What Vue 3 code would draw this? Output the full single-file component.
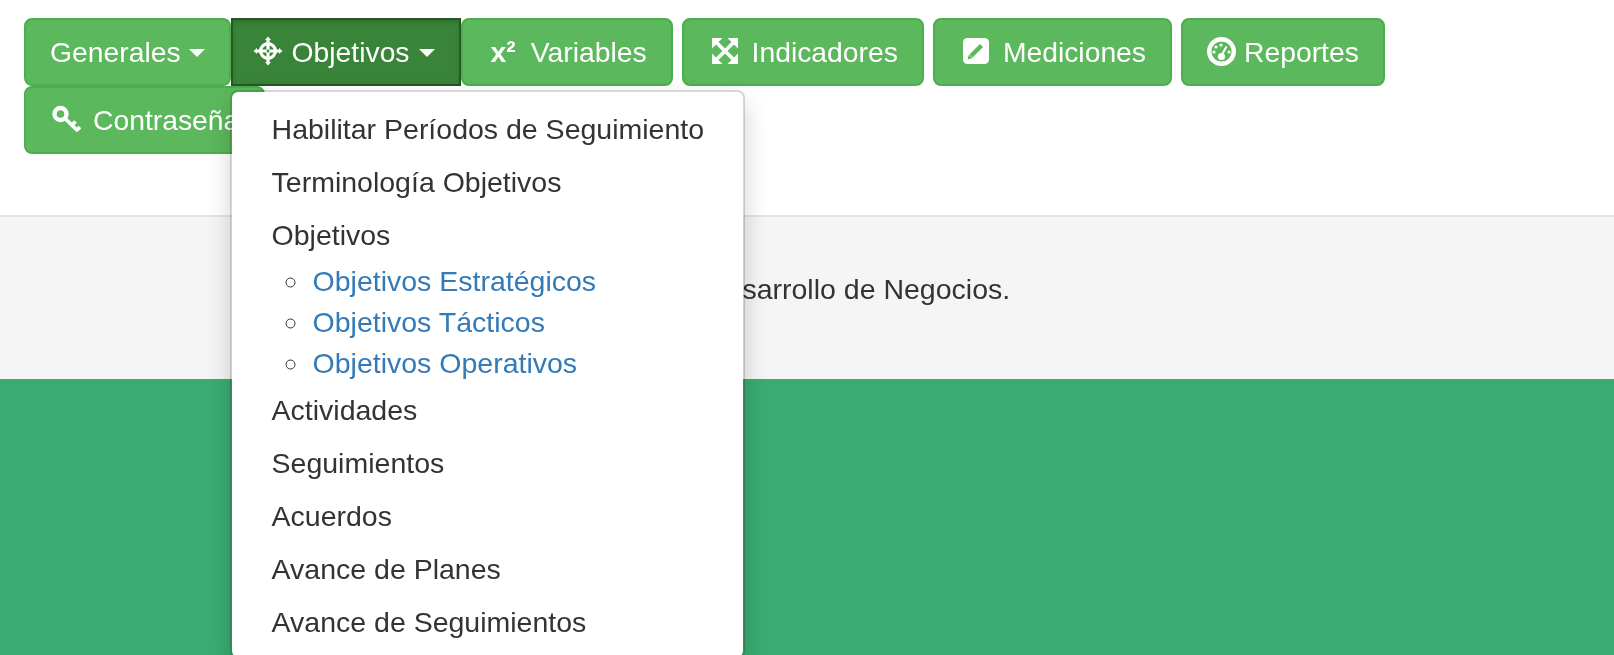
<script setup>
const items1 = ['Habilitar Períodos de Seguimiento', 'Terminología Objetivos', 'Objetivos']
const sub = ['Objetivos Estratégicos', 'Objetivos Tácticos', 'Objetivos Operativos']
const items2 = ['Actividades', 'Seguimientos', 'Acuerdos', 'Avance de Planes', 'Avance de Seguimientos']
</script>

<template>
  <div class="page">
    <header class="top">
      <nav class="nav">
        <a class="btn first">Generales<span class="caret"></span></a>
        <div class="holder">
          <a class="btn active">
            <svg class="ic ic-move" width="30" height="30" viewBox="0 0 30 30">
              <circle cx="15" cy="15" r="7.4" fill="none" stroke="#fff" stroke-width="3.2" />
              <path d="M13.4 3h3.2v24h-3.2zM3 13.4h24v3.2H3z" fill="#fff" />
              <path d="M15 .5l3 3.5h-6zM15 29.5L12 26h6zM.5 15L4 12v6zM29.5 15L26 18v-6z" fill="#fff" />
              <circle cx="15" cy="15" r="1.4" fill="#398439" />
            </svg>Objetivos<span class="caret wide"></span>
          </a>
          <div class="menu">
            <a v-for="t in items1" :key="t" class="item">{{ t }}</a>
            <ul class="sub">
              <li v-for="t in sub" :key="t"><a>{{ t }}</a></li>
            </ul>
            <a v-for="t in items2" :key="t" class="item">{{ t }}</a>
          </div>
        </div>
        <a class="btn gap"><span class="sup">x²</span>Variables</a>
        <a class="btn gap">
          <svg class="ic" width="26" height="26" viewBox="0 0 26 26">
            <path d="M0 0h10.5L0 10.5zM26 0v10.5L15.5 0zM0 26V15.5L10.5 26zM26 26H15.5L26 15.5z" fill="#fff" />
            <path d="M4 4l18 18M22 4L4 22" stroke="#fff" stroke-width="3.6" fill="none" />
          </svg>Indicadores
        </a>
        <a class="btn gap">
          <svg class="ic" width="26" height="26" viewBox="0 0 26 26">
            <rect width="26" height="26" rx="4.5" fill="#fff" />
            <path d="M8 18L18.5 7.5" stroke="#5cb85c" stroke-width="4.5" fill="none" />
            <path d="M4.5 21.5l1.4-5 3.6 3.6z" fill="#5cb85c" />
          </svg>Mediciones
        </a>
        <a class="btn gap">
          <svg class="ic ic-dash" width="29" height="29" viewBox="0 0 29 29">
            <circle cx="14.5" cy="14.5" r="12.3" fill="none" stroke="#fff" stroke-width="4.4" />
            <circle cx="14.5" cy="19.5" r="3.6" fill="#fff" />
            <path d="M14.5 18.5L19.5 9.5" stroke="#fff" stroke-width="2" />
            <circle cx="9" cy="10" r="1.6" fill="#fff" />
            <circle cx="14" cy="8" r="1.6" fill="#fff" />
            <circle cx="7" cy="15" r="1.6" fill="#fff" />
            <circle cx="22" cy="15" r="1.6" fill="#fff" />
          </svg>Reportes
        </a>
        <a class="btn">
          <svg class="ic ic-key" width="29" height="28" viewBox="0 0 29 28">
            <circle cx="8.5" cy="9" r="6" fill="none" stroke="#fff" stroke-width="4.4" />
            <path d="M12.5 13L26 26M20 20l3.5-3.5M25 25l3-3" stroke="#fff" stroke-width="3.8" fill="none" />
          </svg>Contraseña
        </a>
      </nav>
    </header>
    <section class="band">
      <p class="lead">Desarrollo de Negocios.</p>
    </section>
    <section class="green"></section>
  </div>
</template>

<style scoped>
.page {
  height: 655px;
  overflow: hidden;
  display: flex;
  flex-direction: column;
  font-family: "Liberation Sans", Arial, sans-serif;
  font-size: 28.5px;
  line-height: 40px;
  color: #333;
  background: #fff;
  filter: blur(0.4px);
}
.top {
  height: 215px;
  padding: 18px 24px 0;
  box-sizing: border-box;
  flex: none;
}
.nav {
  display: flex;
  flex-wrap: wrap;
}
.holder {
  position: relative;
  z-index: 2;
}
.btn {
  display: inline-flex;
  align-items: center;
  height: 68px;
  box-sizing: border-box;
  padding: 12px 24px;
  border: 2px solid #4cae4c;
  border-radius: 8px;
  background: #5cb85c;
  color: #fff;
  white-space: nowrap;
  font-size: 28.3px;
}
.btn.gap {
  margin-right: 9px;
}
.active {
  background: #398439;
  border-color: #255625;
  border-radius: 0;
  box-shadow: inset 0 3px 5px rgba(0, 0, 0, 0.125);
}
.caret {
  width: 0;
  height: 0;
  margin-left: 8px;
  margin-top: 2px;
  border-top: 8px solid #fff;
  border-left: 8px solid transparent;
  border-right: 8px solid transparent;
}
.caret.wide {
  margin-left: 9px;
}
.ic {
  flex: none;
  margin: -2px 14px 0 4px;
}
.ic-move {
  margin: -2px 9px 0 -4px;
}
.ic-dash {
  margin: -2px 8px 0 0;
}
.ic-key {
  margin: -2px 12px 0 2px;
}
.sup {
  font-weight: 700;
  margin: 0 15px 0 4px;
}
.menu {
  position: absolute;
  left: -1px;
  top: 72px;
  width: 515px;
  box-sizing: border-box;
  padding: 11px 0 8px;
  background: #fff;
  border: 2px solid rgba(0, 0, 0, 0.15);
  border-radius: 8px;
  background-clip: padding-box;
  box-shadow: 0 12px 24px rgba(0, 0, 0, 0.175);
  line-height: 40.8px;
  font-size: 28.5px;
}
.item {
  display: block;
  padding: 6.1px 40px;
  color: #333;
  white-space: nowrap;
}
.sub {
  margin: -1px 0 1px;
  padding: 0 0 0 78px;
  list-style: circle;
}
.sub a {
  color: #337ab7;
  padding-left: 3px;
}
.band {
  flex: none;
  height: 164px;
  box-sizing: border-box;
  border-top: 2px solid #e5e5e5;
  background: #f5f5f5;
  padding: 52px 0 0 706px;
}
.lead {
  margin: 0;
}
.green {
  flex: 1;
  background: #3aac71;
}
</style>
